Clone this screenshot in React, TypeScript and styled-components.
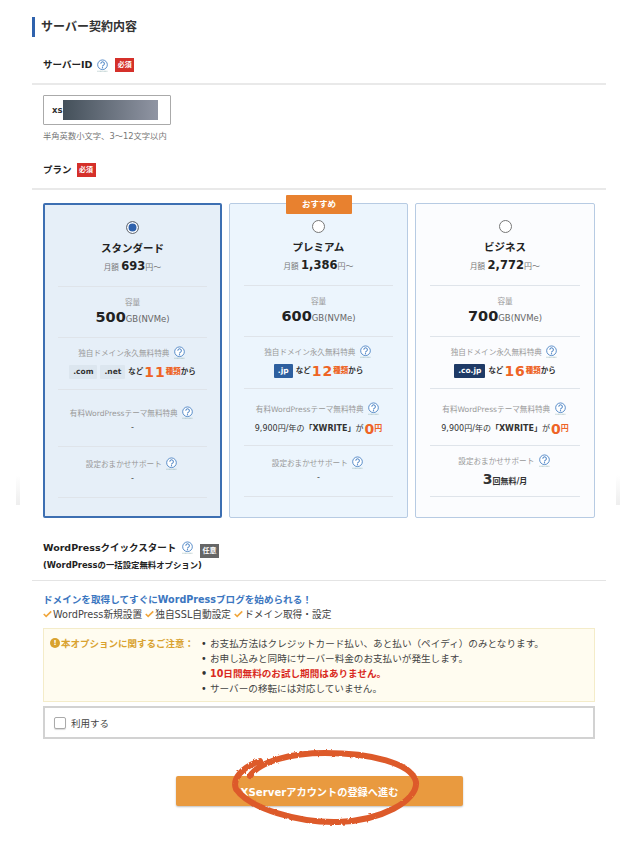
import React from 'react'
import styled, { createGlobalStyle } from 'styled-components'

const GlobalStyle = createGlobalStyle`
  html, body {
    margin: 0;
    padding: 0;
    background: #fff;
  }
  body {
    font-family: 'DejaVu Sans', 'Noto Sans CJK JP', sans-serif;
    color: #222;
    overflow: hidden;
  }
`

const HelpIcon = () => (
  <HelpSvg viewBox="0 0 14 14" aria-hidden="true">
    <circle cx="7" cy="6.2" r="5.2" fill="#fff" stroke="#4f86c6" strokeWidth="1" />
    <path d="M5.2 5a1.9 1.9 0 1 1 2.9 1.6c-.7.4-1.1.8-1.1 1.5" fill="none" stroke="#4f86c6" strokeWidth="1.1" />
    <circle cx="7" cy="9.4" r=".7" fill="#4f86c6" />
    <path d="M1.5 13.2h11" stroke="#8aa" strokeWidth=".7" strokeDasharray="1 .4" />
  </HelpSvg>
)

const Check = () => (
  <CheckSvg viewBox="0 0 12 10" aria-hidden="true">
    <path d="M1 5l3.2 3L11 1.5" fill="none" stroke="#f0a63c" strokeWidth="2.2" />
  </CheckSvg>
)

type Plan = {
  name: string
  price: string
  size: string
  tone: 'selected' | 'soft' | 'plain'
  domains: { label: string; kind: 'pale' | 'blue' | 'navy' }[]
  count: string
  theme: boolean
  support: boolean
}

const plans: Plan[] = [
  {
    name: 'スタンダード',
    price: '693',
    size: '500',
    tone: 'selected',
    domains: [
      { label: '.com', kind: 'pale' },
      { label: '.net', kind: 'pale' },
    ],
    count: '11',
    theme: false,
    support: false,
  },
  {
    name: 'プレミアム',
    price: '1,386',
    size: '600',
    tone: 'soft',
    domains: [{ label: '.jp', kind: 'blue' }],
    count: '12',
    theme: true,
    support: false,
  },
  {
    name: 'ビジネス',
    price: '2,772',
    size: '700',
    tone: 'plain',
    domains: [{ label: '.co.jp', kind: 'navy' }],
    count: '16',
    theme: true,
    support: true,
  },
]

const PlanCard = ({ plan }: { plan: Plan }) => (
  <Card $tone={plan.tone}>
    {plan.tone === 'soft' && <Recommend>おすすめ</Recommend>}
    <CardHead>
      <Radio $on={plan.tone === 'selected'} />
      <PlanName>{plan.name}</PlanName>
      <Price>
        <small>月額</small> <b>{plan.price}</b>
        <span>円〜</span>
      </Price>
    </CardHead>
    <Row $h={51} $pad={9} $gap={0}>
      <RowLabel>容量</RowLabel>
      <Size>
        <b>{plan.size}</b>GB(NVMe)
      </Size>
    </Row>
    <Row $h={52} $pad={8} $gap={5}>
      <RowLabel>
        独自ドメイン永久無料特典 <HelpIcon />
      </RowLabel>
      <DomainLine>
        {plan.domains.map((d) => (
          <Domain key={d.label} $kind={d.kind}>
            {d.label}
          </Domain>
        ))}
        <span>など</span>
        <Count>{plan.count}</Count>
        <CountUnit>種類</CountUnit>
        <span>から</span>
      </DomainLine>
    </Row>
    <Row $h={57} $pad={plan.theme ? 13 : 16} $gap={plan.theme ? 6 : 1}>
      <RowLabel>
        有料WordPressテーマ無料特典 <HelpIcon />
      </RowLabel>
      {plan.theme ? (
        <ThemeLine>
          9,900円/年の<b>「XWRITE」</b>が<Zero>0</Zero>
          <CountUnit>円</CountUnit>
        </ThemeLine>
      ) : (
        <Dash>-</Dash>
      )}
    </Row>
    <Row $h={51} $pad={plan.support ? 8 : 10} $gap={plan.support ? 4 : 1}>
      <RowLabel>
        設定おまかせサポート <HelpIcon />
      </RowLabel>
      {plan.support ? (
        <Support>
          <b>3</b>回無料/月
        </Support>
      ) : (
        <Dash>-</Dash>
      )}
    </Row>
    <LastRule />
  </Card>
)

export default function App() {
  return (
    <Page>
      <GlobalStyle />
      <EdgeFade $side="left" />
      <EdgeFade $side="right" />
      <Heading>サーバー契約内容</Heading>

      <FieldHead>
        サーバーID <HelpIcon /> <Badge>必須</Badge>
      </FieldHead>
      <IdBox>
        xs
        <Masked />
      </IdBox>
      <Hint>半角英数小文字、3〜12文字以内</Hint>

      <FieldHead>
        プラン <Badge>必須</Badge>
      </FieldHead>
      <Plans>
        {plans.map((p) => (
          <PlanCard key={p.name} plan={p} />
        ))}
      </Plans>

      <QuickHead>
        <div>
          WordPressクイックスタート <HelpIcon /> <Badge $grey>任意</Badge>
        </div>
        <QuickSub>(WordPressの一括設定無料オプション)</QuickSub>
      </QuickHead>

      <Lead>ドメインを取得してすぐにWordPressブログを始められる！</Lead>
      <Features>
        <Check />
        WordPress新規設置 <Check />
        独自SSL自動設定 <Check />
        ドメイン取得・設定
      </Features>

      <Notice>
        <NoticeTitle>
          <WarnDot>!</WarnDot>本オプションに関するご注意：
        </NoticeTitle>
        <NoticeList>
          <li>お支払方法はクレジットカード払い、あと払い（ペイディ）のみとなります。</li>
          <li>お申し込みと同時にサーバー料金のお支払いが発生します。</li>
          <Alert>10日間無料のお試し期間はありません。</Alert>
          <li>サーバーの移転には対応していません。</li>
        </NoticeList>
      </Notice>

      <UseBox>
        <CheckBox />
        利用する
      </UseBox>

      <ButtonWrap>
        <NextButton>XServerアカウントの登録へ進む</NextButton>
        <Scribble viewBox="0 0 190 78" aria-hidden="true">
          <defs>
            <filter id="rough">
              <feTurbulence type="fractalNoise" baseFrequency="0.3" numOctaves="2" seed="4" />
              <feDisplacementMap in="SourceGraphic" scale="2.5" />
            </filter>
          </defs>
          <path
            d="M20 27C30 12 62 4 95 4c45 0 87 10 91 29 2 19-36 39-78 40C70 74 20 60 6 40 2 30 12 18 30 12"
            fill="none"
            stroke="#dd5a2c"
            strokeWidth="6"
            strokeLinecap="round"
            filter="url(#rough)"
          />
        </Scribble>
      </ButtonWrap>
    </Page>
  )
}

const Page = styled.div`
  position: relative;
  width: 620px;
  height: 866px;
  box-sizing: border-box;
  padding: 17px 14px 0 32px;
  background: #fff;
`

const EdgeFade = styled.div<{ $side: 'left' | 'right' }>`
  position: absolute;
  top: 475px;
  ${(p) => (p.$side === 'left' ? 'left: 16px;' : 'right: 0;')}
  width: 4px;
  height: 30px;
  background: linear-gradient(180deg, #fff, #eee);
`

const Heading = styled.h2`
  margin: 0;
  height: 20px;
  border-left: 3px solid #2f62ad;
  padding-left: 6px;
  font-size: 12px;
  line-height: 20px;
  font-weight: 700;
  color: #333;
`

const FieldHead = styled.div`
  height: 48px;
  box-sizing: border-box;
  border-bottom: 2px solid #e9e9e9;
  padding: 0 0 11px 11px;
  display: flex;
  align-items: flex-end;
  gap: 3px;
  font-size: 9.5px;
  line-height: 14px;
  font-weight: 700;
`

const Badge = styled.span<{ $grey?: boolean }>`
  display: inline-flex;
  align-items: center;
  justify-content: center;
  width: 19px;
  height: 14px;
  background: ${(p) => (p.$grey ? '#666' : '#d5302a')};
  color: #fff;
  font-size: 7px;
  font-weight: 700;
  margin-left: 2px;
  vertical-align: -2px;
`

const HelpSvg = styled.svg`
  display: inline-block;
  width: 13px;
  height: 13px;
  vertical-align: -3px;
  margin: 0 1px;
`

const IdBox = styled.div`
  margin: 10px 0 0 11px;
  width: 128px;
  height: 30px;
  box-sizing: border-box;
  border: 1px solid #aaa;
  border-radius: 1px;
  padding: 0 12px 0 8px;
  display: flex;
  align-items: center;
  font-size: 8.5px;
  font-weight: 700;
  color: #333;
`

const Masked = styled.span`
  flex: 1;
  height: 20px;
  background: linear-gradient(90deg, #44505a, #9095a3);
`

const Hint = styled.div`
  margin: 5px 0 0 11px;
  font-size: 8.3px;
  line-height: 12px;
  color: #777;
`

const Plans = styled.div`
  margin: 13px 0 0 11px;
  width: 552px;
  display: grid;
  grid-template-columns: 179px 179px 180px;
  column-gap: 7px;
  height: 315px;
`

const Card = styled.div<{ $tone: 'selected' | 'soft' | 'plain' }>`
  position: relative;
  box-sizing: border-box;
  height: 315px;
  border-radius: 2px;
  border: ${(p) => (p.$tone === 'selected' ? '2px solid #3d6fb2' : '1px solid #b7cbe3')};
  background: ${(p) => (p.$tone === 'selected' ? '#e6eff8' : p.$tone === 'soft' ? '#ecf5fd' : '#fbfcfe')};
  padding: 0 ${(p) => (p.$tone === 'selected' ? 13 : 14)}px;
`

const Recommend = styled.div`
  position: absolute;
  top: -9px;
  left: 56px;
  width: 66px;
  height: 19px;
  background: #e8812f;
  border-radius: 1px;
  color: #fff;
  font-size: 8.5px;
  font-weight: 700;
  line-height: 19px;
  text-align: center;
`

const CardHead = styled.div`
  height: 81px;
  display: flex;
  flex-direction: column;
  align-items: center;
  padding-top: 16px;
  box-sizing: border-box;
`

const Radio = styled.span<{ $on: boolean }>`
  width: 13px;
  height: 13px;
  box-sizing: border-box;
  border-radius: 50%;
  border: 1px solid #777;
  background: ${(p) => (p.$on ? '#2f62ad' : '#fff')};
  box-shadow: ${(p) => (p.$on ? 'inset 0 0 0 1.5px #fff' : 'none')};
`

const PlanName = styled.div`
  margin-top: 6px;
  font-size: 10.5px;
  line-height: 17px;
  font-weight: 700;
`

const Price = styled.div`
  margin-top: 1px;
  font-size: 8px;
  line-height: 16px;
  color: #777;
  small {
    font-size: 7.5px;
  }
  b {
    font-size: 11.5px;
    color: #222;
  }
`

const Row = styled.div<{ $h: number; $pad: number; $gap: number }>`
  height: ${(p) => p.$h}px;
  box-sizing: border-box;
  border-top: 1px solid #dfe4ea;
  display: flex;
  flex-direction: column;
  align-items: center;
  padding-top: ${(p) => p.$pad}px;
  gap: ${(p) => p.$gap}px;
  white-space: nowrap;
`

const LastRule = styled.div`
  border-top: 1px solid #dfe4ea;
`

const RowLabel = styled.div`
  font-size: 7.6px;
  line-height: 13px;
  color: #999;
`

const Size = styled.div`
  font-size: 8.5px;
  line-height: 16px;
  color: #666;
  b {
    font-size: 14.5px;
    color: #222;
  }
`

const DomainLine = styled.div`
  display: flex;
  align-items: center;
  font-size: 7.5px;
  line-height: 14px;
  font-weight: 700;
  color: #333;
`

const Domain = styled.span<{ $kind: 'pale' | 'blue' | 'navy' }>`
  padding: 0 4px;
  height: 14px;
  line-height: 14px;
  margin-right: 3px;
  font-size: 7.5px;
  background: ${(p) => (p.$kind === 'pale' ? '#dce6ef' : p.$kind === 'blue' ? '#2d5f9f' : '#1e3a66')};
  color: ${(p) => (p.$kind === 'pale' ? '#333' : '#fff')};
  border-radius: 1px;
`

const Count = styled.b`
  font-size: 14px;
  color: #ee6426;
  letter-spacing: 1px;
  margin-left: 1px;
`

const CountUnit = styled.b`
  font-size: 7.5px;
  color: #ee6426;
`

const ThemeLine = styled.div`
  display: flex;
  align-items: center;
  font-size: 8px;
  line-height: 14px;
  color: #333;
  b {
    font-size: 8px;
  }
`

const Zero = styled.b`
  && {
    font-size: 14px;
  }
  color: #ee6426;
  margin: 0 0 0 1px;
`

const Dash = styled.div`
  font-size: 8px;
  line-height: 14px;
  color: #444;
`

const Support = styled.div`
  font-size: 8px;
  line-height: 14px;
  font-weight: 700;
  color: #333;
  b {
    font-size: 14px;
  }
`

const QuickHead = styled.div`
  margin-top: 23px;
  height: 40px;
  box-sizing: border-box;
  border-bottom: 1px solid #e4e4e4;
  padding-left: 11px;
  font-size: 9.5px;
  line-height: 14px;
  font-weight: 700;
`

const QuickSub = styled.div`
  font-size: 8.4px;
  line-height: 14px;
`

const Lead = styled.div`
  margin: 12px 0 0 11px;
  font-size: 9.6px;
  line-height: 14px;
  font-weight: 700;
  color: #3b76c0;
`

const CheckSvg = styled.svg`
  width: 9px;
  height: 8px;
  margin-right: 1px;
`

const Features = styled.div`
  margin: 0 0 0 11px;
  font-size: 9.7px;
  line-height: 15px;
  color: #444;
`

const Notice = styled.div`
  margin: 6px 0 0 11px;
  width: 552px;
  height: 74px;
  box-sizing: border-box;
  background: #fffcf0;
  border: 1px solid #f4ecc9;
  padding: 7px 0 0 6px;
  display: flex;
  gap: 7px;
`

const NoticeTitle = styled.div`
  display: flex;
  align-items: flex-start;
  font-size: 9.5px;
  line-height: 15px;
  font-weight: 700;
  color: #d9a22f;
  white-space: nowrap;
`

const WarnDot = styled.span`
  width: 10px;
  height: 10px;
  margin: 2px 1px 0 0;
  border-radius: 50%;
  background: #d9a22f;
  color: #fff;
  font-size: 7px;
  line-height: 10px;
  text-align: center;
`

const NoticeList = styled.ul`
  margin: 0;
  padding: 0;
  list-style: none;
  font-size: 9.6px;
  line-height: 15px;
  color: #444;
  white-space: nowrap;
  li::before {
    content: '•';
    display: inline-block;
    width: 9px;
    color: #333;
  }
`

const Alert = styled.li`
  color: #d92a22;
  font-weight: 700;
`

const UseBox = styled.div`
  margin: 4px 0 0 11px;
  width: 552px;
  height: 33px;
  box-sizing: border-box;
  border: 2px solid #d2d2d2;
  padding-left: 9px;
  display: flex;
  align-items: center;
  gap: 5px;
  font-size: 9.5px;
  color: #444;
`

const CheckBox = styled.span`
  width: 12px;
  height: 12px;
  box-sizing: border-box;
  border: 1px solid #aaa;
  border-radius: 2px;
  background: #fff;
  box-shadow: 0 1px 1px rgba(0, 0, 0, 0.15);
`

const ButtonWrap = styled.div`
  position: relative;
  margin: 37px 0 0 144px;
  width: 287px;
  height: 30px;
`

const NextButton = styled.button`
  width: 100%;
  height: 100%;
  border: 0;
  border-radius: 2px;
  background: #e99a3f;
  box-shadow: 0 1px 2px rgba(0, 0, 0, 0.25);
  color: #fff;
  font-family: inherit;
  font-size: 10.2px;
  font-weight: 700;
`

const Scribble = styled.svg`
  position: absolute;
  left: 54px;
  top: -27px;
  width: 190px;
  height: 78px;
  pointer-events: none;
`
